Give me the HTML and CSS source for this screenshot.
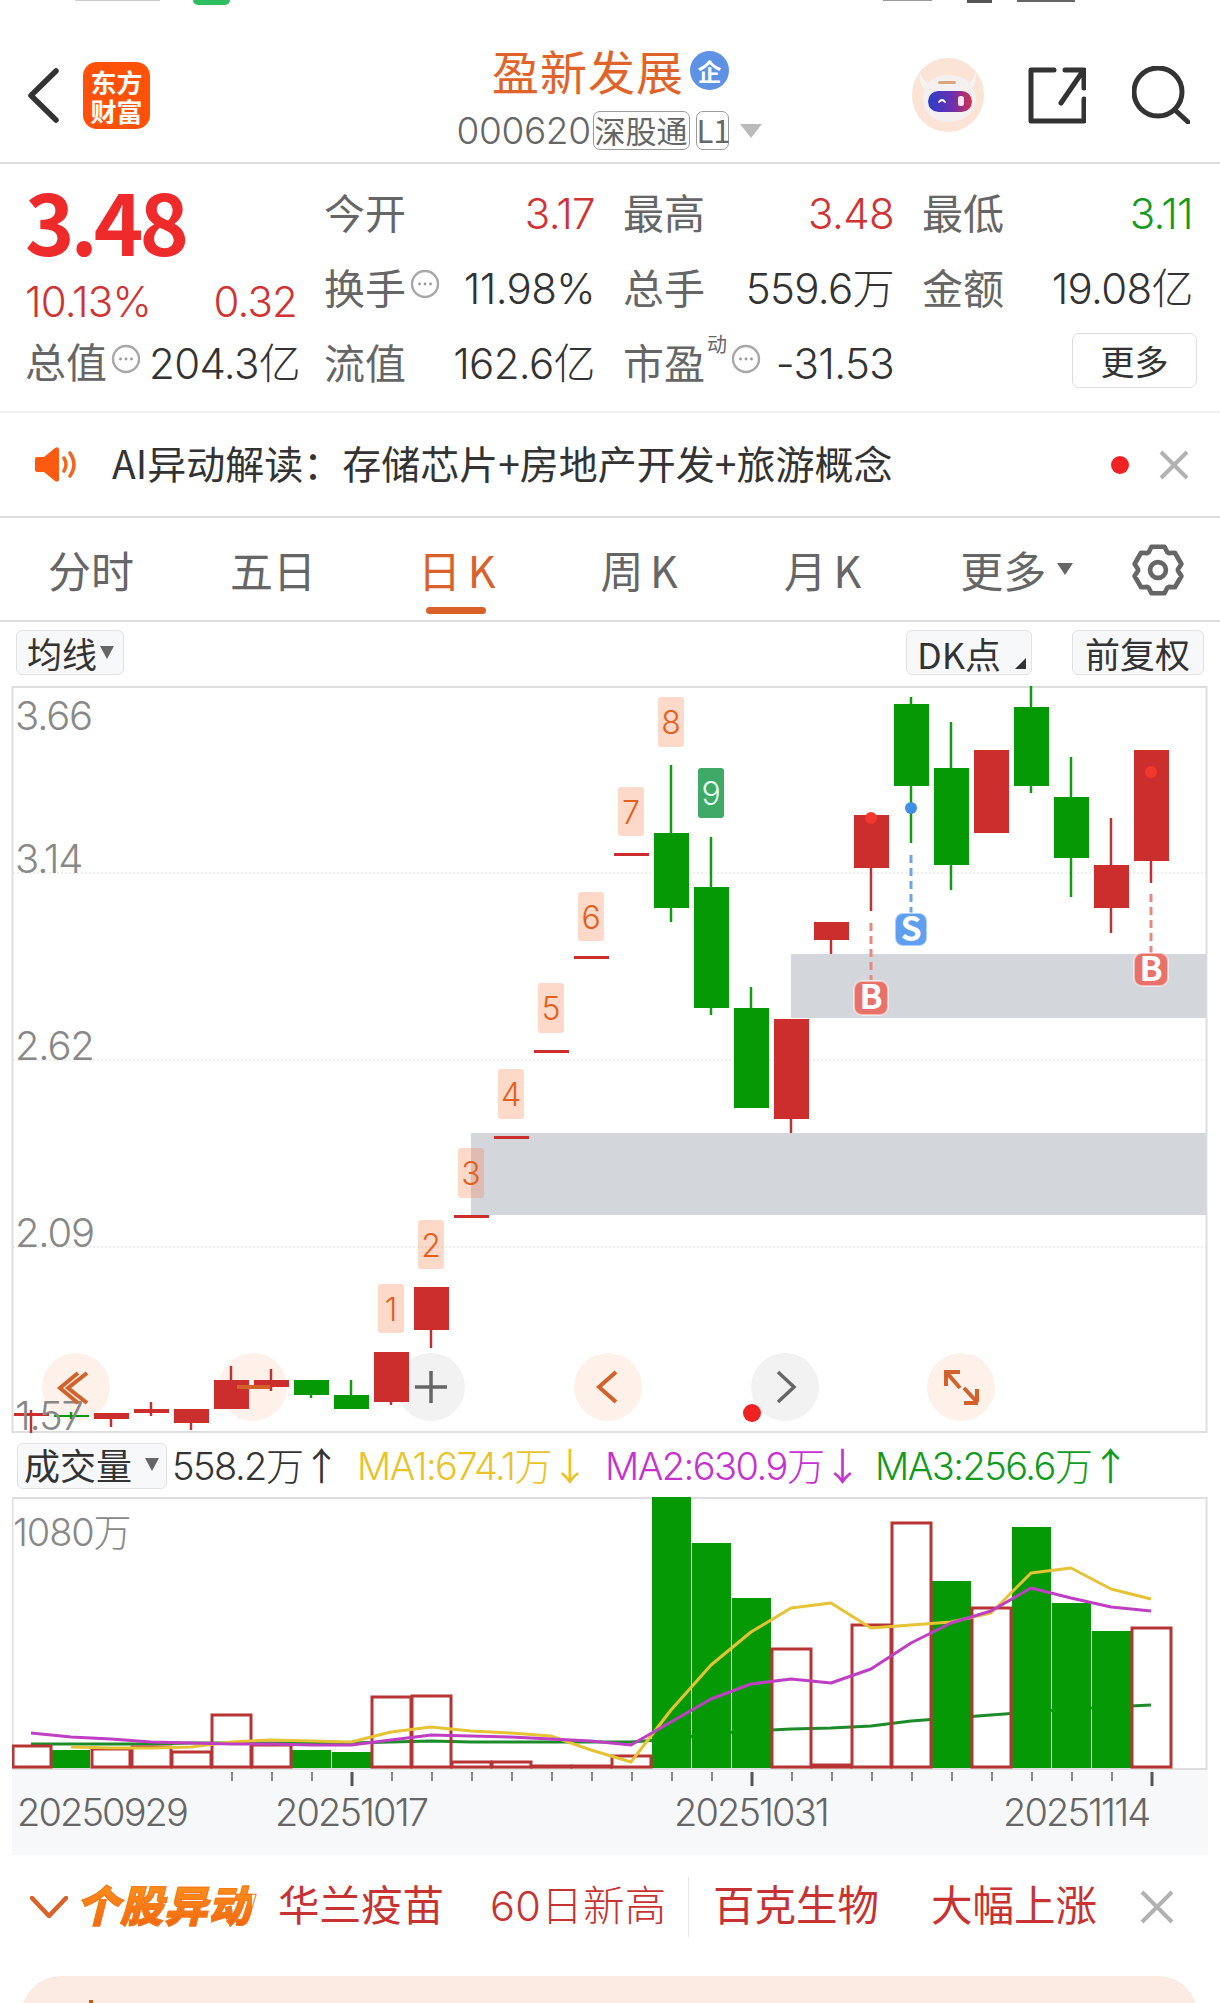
FILE: index.html
```html
<!DOCTYPE html>
<html lang="zh-CN">

<head>
	<meta charset="UTF-8">
	<meta name="viewport" content="width=device-width, initial-scale=1.0">
	<title>盈新发展 000620</title>
	<link rel="stylesheet" href="styles.css">
</head>

<body>
	<svg class="defs" width="0" height="0">
		<symbol id="icon-more" viewBox="0 0 30 30">
			<circle cx="15" cy="15" r="13" fill="none" stroke="#a8a8a8" stroke-width="2.4" />
			<circle cx="9.5" cy="15" r="1.4" fill="#999" />
			<circle cx="15" cy="15" r="1.4" fill="#999" />
			<circle cx="20.5" cy="15" r="1.4" fill="#999" />
		</symbol>
	</svg>

	<div class="status">
		<span class="status-time"></span>
		<span class="status-pill"></span>
		<span class="status-signal"></span>
		<span class="status-wifi"></span>
		<span class="status-bat"></span>
	</div>

	<header class="head">
		<div class="head-left">
			<svg class="icon-back" viewBox="0 0 33 55"><path d="M29 3 4 27.500 29 52" /></svg>
			<div class="logo">东方<br>财富</div>
		</div>
		<div class="head-mid">
			<div class="head-title">
				<span class="stock-name">盈新发展</span>
				<span class="badge-qi">企</span>
			</div>
			<div class="head-code">
				<span class="stock-code">000620</span>
				<span class="tag tag-sgt">深股通</span>
				<span class="tag tag-l1">L1</span>
				<i class="caret-code"></i>
			</div>
		</div>
		<div class="head-right">
			<svg class="robot" viewBox="0 0 74 74">
				<defs>
					<linearGradient id="visor" x1="0" x2="1" y1="0" y2="0">
						<stop offset="0" stop-color="#2b3fc8" />
						<stop offset=".55" stop-color="#6a2fb0" />
						<stop offset="1" stop-color="#d3304f" />
					</linearGradient>
				</defs>
				<ellipse cx="37" cy="37" rx="36" ry="37" fill="#fbe3d6" />
				<path d="M9 14q2 9 9 11l-4 7q-7-7-5-18ZM64 13q0 10-8 12l4 7q7-7 4-19Z" fill="#f6f3f1" />
				<path d="M12 40q0-22 25-23 26 1 28 23 0 22-28 24-25-2-25-24Z" fill="#f3f0ef" />
				<rect x="27" y="23" width="18" height="3" rx="1.500" fill="#d9a878" />
				<rect x="17" y="33" width="44" height="21" rx="10.500" fill="url(#visor)" />
				<path d="M28 44q3-4 6 0" fill="none" stroke="#fff" stroke-width="1.800" stroke-linecap="round" />
				<rect x="47" y="38" width="6" height="10" rx="2.500" fill="#fbe4ea" />
			</svg>
			<svg class="icon-share" viewBox="0 0 58 57">
				<path d="M26 3H3v51h53V32M33 36 55 4M37 3h19v18" />
			</svg>
			<svg class="icon-search" viewBox="0 0 58 58">
				<circle cx="26" cy="26" r="24" />
				<path d="M43 44 56 56" />
			</svg>
		</div>
	</header>

	<section class="quote">
		<div class="quote-main">
			<div class="price">3.48</div>
			<div class="change"><span>10.13%</span><span>0.32</span></div>
			<div class="quote-cap">
				<span class="stat-label">总值</span>
				<svg class="icon-more"><use href="#icon-more" /></svg>
				<span class="stat-val">204.3亿</span>
			</div>
		</div>
		<div class="stats">
			<div class="stat"><span class="stat-label">今开</span><span class="stat-val up">3.17</span></div>
			<div class="stat"><span class="stat-label">最高</span><span class="stat-val up">3.48</span></div>
			<div class="stat"><span class="stat-label">最低</span><span class="stat-val down">3.11</span></div>
			<div class="stat"><span class="stat-label">换手<svg class="icon-more"><use href="#icon-more" /></svg></span><span class="stat-val">11.98%</span></div>
			<div class="stat"><span class="stat-label">总手</span><span class="stat-val">559.6万</span></div>
			<div class="stat"><span class="stat-label">金额</span><span class="stat-val">19.08亿</span></div>
			<div class="stat"><span class="stat-label">流值</span><span class="stat-val">162.6亿</span></div>
			<div class="stat"><span class="stat-label">市盈<sup class="stat-sup">动</sup><svg class="icon-more"><use href="#icon-more" /></svg></span><span class="stat-val">-31.53</span></div>
			<div class="stat stat-end"><button class="btn-more">更多</button></div>
		</div>
	</section>

	<section class="notice">
		<svg class="icon-speaker" viewBox="0 0 44 35">
			<path class="speaker-body" d="M1 12q0-2 2-2h7L21 1q3-2 4 1v31q-1 3-4 1L10 25H3q-2 0-2-2Z" />
			<path class="speaker-wave" d="M30 11q4 6.500 0 13M36 6q8 11.500 0 23" />
		</svg>
		<span class="notice-text">AI异动解读：存储芯片+房地产开发+旅游概念</span>
		<i class="notice-dot"></i>
		<svg class="icon-close notice-close" viewBox="0 0 30 30"><path d="M2 2 28 28M28 2 2 28" /></svg>
	</section>

	<nav class="tabs">
		<span class="tab tab-fs">分时</span>
		<span class="tab tab-wr">五日</span>
		<span class="tab tab-rk tab-active">日 K</span>
		<span class="tab tab-zk">周 K</span>
		<span class="tab tab-yk">月 K</span>
		<span class="tab tab-more">更多<i class="caret-tab"></i></span>
		<svg class="icon-gear" viewBox="-29 -29 58 58">
			<path d="M-10-19-7-25H7L10-19 11.450-18.160 18.150-18.560 25.150-6.440 21.450-.84V.84L25.150 6.440 18.160 18.560 11.460 18.160 10 19 7 25H-7L-10 19-11.450 18.160-18.150 18.560-25.150 6.440-21.450.84V-.84L-25.150-6.440-18.160-18.560-11.460-18.160Z" />
			<circle r="8.500" />
		</svg>
	</nav>

	<div class="toolbar">
		<span class="tool-btn tool-ma">均线<i class="caret-tool"></i></span>
		<span class="tool-btn tool-dk">DK点<i class="corner-tool"></i></span>
		<span class="tool-btn tool-fq">前复权</span>
	</div>

	<svg class="kline" viewBox="12 686 1196 748">
		<rect class="frame" x="12.500" y="687" width="1194" height="745" />
		<path class="grid" d="M13 873H1206M13 1060H1206M13 1247H1206" />

		<!-- control buttons lie under the candles -->
		<circle class="ctl-warm" cx="76" cy="1387" r="34" />
		<circle class="ctl-warm" cx="253" cy="1387" r="34" />
		<circle class="ctl-gray" cx="431" cy="1387" r="34" />
		<circle class="ctl-warm" cx="608" cy="1387" r="34" />
		<circle class="ctl-gray" cx="785" cy="1387" r="34" />
		<circle class="ctl-warm" cx="961" cy="1387" r="34" />

		<rect class="zone" x="791" y="954" width="415" height="64" />
		<rect class="zone" x="471" y="1133" width="735" height="82" />

		<path class="wick-red" d="M31 1410V1433M151 1402V1416M111 1419V1427M191 1423V1430M231 1366V1380M271 1369V1391M391 1402V1405M431 1330V1348M791 1119V1133M831 940V954M871 868V911M1111 818V865M1111 908V933M1151 861V883" />
		<path class="wick-green" d="M71 1412V1419M311 1395V1398M351 1380V1395M671 765V833M671 908V922M711 837V887M711 1008V1015M751 987V1008M911 697V704M911 786V843M951 722V768M951 865V890M1031 686V707M1031 786V793M1071 757V797M1071 858V897" />

		<g class="body-red">
			<rect x="14" y="1413" width="35" height="3" />
			<rect x="94" y="1413" width="35" height="6" />
			<rect x="134" y="1409" width="35" height="4" />
			<rect x="174" y="1409" width="35" height="14" />
			<rect x="214" y="1380" width="35" height="29" />
			<rect x="254" y="1380" width="35" height="7" />
			<rect x="374" y="1352" width="35" height="50" />
			<rect x="414" y="1287" width="35" height="43" />
			<rect x="454" y="1215" width="35" height="3" />
			<rect x="494" y="1136" width="35" height="3" />
			<rect x="534" y="1050" width="35" height="3" />
			<rect x="574" y="956" width="35" height="3" />
			<rect x="614" y="853" width="35" height="3" />
			<rect x="774" y="1019" width="35" height="100" />
			<rect x="814" y="922" width="35" height="18" />
			<rect x="854" y="815" width="35" height="53" />
			<rect x="974" y="750" width="35" height="83" />
			<rect x="1094" y="865" width="35" height="43" />
			<rect x="1134" y="750" width="35" height="111" />
		</g>
		<g class="body-green">
			<rect x="54" y="1415" width="35" height="2" />
			<rect x="294" y="1380" width="35" height="15" />
			<rect x="334" y="1395" width="35" height="14" />
			<rect x="654" y="833" width="35" height="75" />
			<rect x="694" y="887" width="35" height="121" />
			<rect x="734" y="1008" width="35" height="100" />
			<rect x="894" y="704" width="35" height="82" />
			<rect x="934" y="768" width="35" height="97" />
			<rect x="1014" y="707" width="35" height="79" />
			<rect x="1054" y="797" width="35" height="61" />
		</g>

		<g class="nine">
			<rect x="378" y="1284" width="26" height="49" rx="3" /><text x="391" y="1321">1</text>
			<rect x="418" y="1220" width="26" height="49" rx="3" /><text x="431" y="1257">2</text>
			<rect x="458" y="1148" width="26" height="50" rx="3" /><text x="471" y="1185">3</text>
			<rect x="498" y="1069" width="26" height="50" rx="3" /><text x="511" y="1106">4</text>
			<rect x="538" y="983" width="26" height="50" rx="3" /><text x="551" y="1020">5</text>
			<rect x="578" y="892" width="26" height="49" rx="3" /><text x="591" y="929">6</text>
			<rect x="618" y="787" width="26" height="49" rx="3" /><text x="631" y="824">7</text>
			<rect x="658" y="697" width="26" height="50" rx="3" /><text x="671" y="734">8</text>
		</g>
		<g class="nine nine-end">
			<rect x="698" y="768" width="26" height="50" rx="3" /><text x="711" y="805">9</text>
		</g>

		<path class="dash-red" d="M871 923V980M1151 894V953" />
		<path class="dash-blue" d="M911 855V913" />
		<circle class="dot-red" cx="871" cy="818" r="6" />
		<circle class="dot-red" cx="1151" cy="772" r="6" />
		<circle class="dot-blue" cx="911" cy="808" r="6" />

		<g class="mark mark-b">
			<rect x="854" y="981" width="34" height="34" rx="8" /><text x="871" y="1009">B</text>
			<rect x="1134" y="953" width="34" height="33" rx="8" /><text x="1151" y="981">B</text>
		</g>
		<g class="mark mark-s">
			<rect x="895" y="913" width="32" height="33" rx="8" /><text x="911" y="941">S</text>
		</g>

		<g class="axis-y">
			<text x="15" y="730">3.66</text>
			<text x="15" y="873">3.14</text>
			<text x="15" y="1060">2.62</text>
			<text x="15" y="1247">2.09</text>
			<text x="15" y="1430">1.57</text>
		</g>

		<path class="ctl-icon-warm" d="M87 1373 68 1388 87 1403M78 1373 60 1388 78 1403" />
		<path class="ctl-icon-warm" d="M237 1387H270" />
		<path class="ctl-icon-gray" d="M415 1387H447M431 1371V1403" />
		<path class="ctl-icon-warm" d="M616 1372 599 1387 616 1402" />
		<path class="ctl-icon-gray" d="M778 1372 794 1387 778 1402" />
		<path class="ctl-icon-warm" d="M946 1386V1372H960M947 1373 960 1388M978 1403H964M977 1402V1389M977 1402 964 1388" />
		<circle class="dot-live" cx="752" cy="1413" r="9" />
	</svg>

	<div class="vol-legend">
		<span class="tool-btn tool-vol">成交量<i class="caret-tool"></i></span>
		<span class="vol-now">558.2万<b class="arrow">↑</b></span>
		<span class="vol-ma1">MA1:674.1万<b class="arrow">↓</b></span>
		<span class="vol-ma2">MA2:630.9万<b class="arrow">↓</b></span>
		<span class="vol-ma3">MA3:256.6万<b class="arrow">↑</b></span>
	</div>

	<svg class="volume" viewBox="12 1497 1196 273">
		<rect class="frame" x="12.500" y="1498" width="1194" height="271" />
		<polyline class="ma3" points="31,1744 71,1744 111,1744 151,1744 191,1743 231,1743 271,1743 311,1743 351,1743 391,1742 431,1741 471,1742 511,1742 551,1742 591,1742 631,1742 671,1739 711,1734 751,1731 791,1729 831,1728 871,1726 911,1721 951,1718 991,1715 1031,1712 1071,1709 1111,1707 1151,1705" />

		<g class="vol-down">
			<rect x="52" y="1750" width="38" height="18" />
			<rect x="292" y="1750" width="39" height="18" />
			<rect x="332" y="1752" width="39" height="16" />
			<rect x="652" y="1497" width="39" height="271" />
			<rect x="692" y="1543" width="39" height="225" />
			<rect x="732" y="1598" width="39" height="170" />
			<rect x="932" y="1581" width="39" height="187" />
			<rect x="1012" y="1527" width="39" height="241" />
			<rect x="1052" y="1603" width="39" height="165" />
			<rect x="1092" y="1631" width="39" height="137" />
		</g>
		<g class="vol-up">
			<rect x="13" y="1746" width="38" height="21" />
			<rect x="92" y="1749" width="38" height="18" />
			<rect x="132" y="1747" width="39" height="20" />
			<rect x="172" y="1752" width="39" height="15" />
			<rect x="212" y="1715" width="39" height="52" />
			<rect x="252" y="1745" width="39" height="22" />
			<rect x="372" y="1697" width="39" height="70" />
			<rect x="412" y="1696" width="39" height="71" />
			<rect x="452" y="1762" width="39" height="5" />
			<rect x="492" y="1762" width="39" height="5" />
			<rect x="532" y="1766" width="39" height="1" />
			<rect x="572" y="1766" width="39" height="1" />
			<rect x="612" y="1756" width="39" height="11" />
			<rect x="772" y="1649" width="39" height="118" />
			<rect x="812" y="1765" width="39" height="2" />
			<rect x="852" y="1625" width="39" height="142" />
			<rect x="892" y="1523" width="39" height="244" />
			<rect x="972" y="1608" width="39" height="159" />
			<rect x="1132" y="1628" width="39" height="139" />
		</g>

		<polyline class="ma1" points="71,1747 111,1748 151,1748 191,1747 231,1742 271,1740 311,1741 351,1742 391,1732 431,1727 471,1731 511,1733 551,1736 591,1750 631,1762 671,1710 711,1665 751,1632 791,1608 831,1603 871,1628 911,1625 951,1622 991,1613 1031,1573 1071,1568 1111,1589 1151,1599" />
		<polyline class="ma2" points="31,1733 71,1737 111,1739 151,1742 191,1743 231,1744 271,1744 311,1745 351,1745 391,1740 431,1735 471,1736 511,1737 551,1739 591,1741 631,1745 671,1722 711,1699 751,1684 791,1679 831,1683 871,1669 911,1643 951,1623 991,1611 1031,1588 1071,1598 1111,1607 1151,1611" />
		<text class="vol-top" x="13" y="1546">1080万</text>
	</svg>

	<svg class="axis-x" viewBox="12 1770 1196 85">
		<path class="tick" d="M232 1772V1781M272 1772V1781M312 1772V1781M392 1772V1781M432 1772V1781M472 1772V1781M512 1772V1781M552 1772V1781M592 1772V1781M632 1772V1781M672 1772V1781M712 1772V1781M792 1772V1781M832 1772V1781M872 1772V1781M912 1772V1781M952 1772V1781M992 1772V1781M1032 1772V1781M1072 1772V1781M1112 1772V1781" />
		<path class="tick tick-main" d="M352 1772V1786M752 1772V1786M1152 1772V1786" />
		<text x="17" y="1826">20250929</text>
		<text x="275" y="1826">20251017</text>
		<text x="674" y="1826">20251031</text>
		<text x="1003" y="1826">20251114</text>
	</svg>

	<section class="alert">
		<svg class="icon-fold" viewBox="0 0 38 22"><path d="M2 2 19 20 36 2" /></svg>
		<span class="alert-title">个股异动</span>
		<span class="alert-item alert-a">华兰疫苗</span>
		<span class="alert-item alert-b">60日新高</span>
		<i class="alert-line"></i>
		<span class="alert-item alert-c">百克生物</span>
		<span class="alert-item alert-d">大幅上涨</span>
		<svg class="icon-close alert-close" viewBox="0 0 34 34"><path d="M2 2 32 32M32 2 2 32" /></svg>
	</section>

	<section class="card"><i class="card-mark"></i></section>
</body>

</html>
```

FILE: styles.css
```css
* {
	margin: 0;
	padding: 0;
	box-sizing: border-box;
}

html,
body {
	height: 2003px;
	overflow: hidden;
}

body {
	width: 1220px;
	background: #fff;
	font-family: 'Noto Sans CJK SC', 'Noto Sans', sans-serif;
	color: #333;
}

i {
	display: block;
	font-style: normal;
}

svg {
	display: block;
}

.defs {
	position: absolute;
}

/* numbers: this face has the narrow 1 of the reference */
.stat-val,
.change,
.stock-code,
.axis-y text,
.axis-x text,
.vol-top,
.vol-legend span:not(.tool-btn),
.nine text,
.alert-b {
	font-family: 'Inter', 'Noto Sans CJK SC', sans-serif;
	font-weight: 300;
	letter-spacing: -.04em;
}

.arrow {
	font-family: 'Noto Sans CJK SC', sans-serif;
	font-weight: 400;
	letter-spacing: 0;
}

/* status bar, only its lower edge is on screen */
.status {
	display: flex;
	height: 6px;
	overflow: hidden;
}

.status-time {
	width: 85px;
	height: 1px;
	margin-left: 75px;
	background: #ccc;
}

.status-pill {
	width: 37px;
	height: 5px;
	margin-left: 33px;
	background: #2fbd62;
	border-radius: 0 0 8px 8px;
}

.status-signal {
	width: 49px;
	height: 1px;
	margin-left: 653px;
	background: #999;
}

.status-wifi {
	width: 25px;
	height: 3px;
	margin-left: 35px;
	background: #555;
}

.status-bat {
	width: 58px;
	height: 2px;
	margin-left: 25px;
	background: #666;
}

/* header */
.head {
	display: grid;
	grid-template-columns: 1fr auto 1fr;
	height: 158px;
	border-bottom: 2px solid #dcdcdc;
}

.head-left {
	display: flex;
	align-items: center;
	padding: 22px 0 0 27px;
}

.icon-back {
	width: 33px;
	height: 55px;
	fill: none;
	stroke: #333;
	stroke-width: 5.500;
	stroke-linecap: round;
	stroke-linejoin: round;
}

.logo {
	width: 67px;
	height: 67px;
	margin-left: 23px;
	padding-top: 5px;
	background: #ff5208;
	border-radius: 14px;
	color: #fff;
	font-size: 26px;
	font-weight: 700;
	line-height: 29px;
	text-align: center;
}

.head-mid {
	padding-top: 44px;
}

.head-title {
	display: flex;
	align-items: center;
	justify-content: center;
	height: 40px;
	padding-left: 1px;
}

.stock-name {
	color: #e0642a;
	font-size: 47px;
	line-height: 40px;
	letter-spacing: 1px;
}

.badge-qi {
	width: 39px;
	height: 39px;
	margin-left: 6px;
	background: #5f92e4;
	border-radius: 50%;
	color: #fff;
	font-size: 24px;
	font-weight: 700;
	line-height: 39px;
	text-align: center;
}

.head-code {
	display: flex;
	align-items: center;
	height: 39px;
	margin-top: 21px;
}

.stock-code {
	width: 130px;
	margin-left: -2px;
	color: #666;
	font-size: 37px;
	line-height: 39px;
	letter-spacing: -.01em;
}

.tag {
	height: 39px;
	border: 1.500px solid #999;
	border-radius: 7px;
	color: #666;
	font-size: 31px;
	line-height: 35px;
	text-align: center;
}

.tag-sgt {
	width: 97px;
	margin-left: 6px;
}

.tag-l1 {
	width: 33px;
	margin-left: 6px;
}

.caret-code {
	width: 0;
	height: 0;
	margin-left: 11px;
	border-top: 14px solid #bbb;
	border-left: 11px solid transparent;
	border-right: 11px solid transparent;
}

.head-right {
	display: flex;
	align-items: center;
	justify-content: flex-end;
	padding: 22px 30px 0 0;
}

.robot {
	width: 74px;
	height: 74px;
	filter: blur(.5px);
}

.icon-share {
	width: 58px;
	height: 57px;
	margin-left: 43px;
	fill: none;
	stroke: #333;
	stroke-width: 5;
	stroke-linecap: round;
	stroke-linejoin: round;
}

.icon-search {
	width: 58px;
	height: 58px;
	margin-left: 46px;
	fill: none;
	stroke: #333;
	stroke-width: 5;
	stroke-linecap: round;
}

/* quote block */
.quote {
	display: flex;
	height: 249px;
	padding: 0 27px 0 25px;
	border-bottom: 2px solid #efefef;
}

.quote-main {
	width: 272px;
}

.price {
	height: 100px;
	padding-top: 6px;
	color: #ee2a2a;
	font-size: 84px;
	font-weight: 700;
	line-height: 100px;
	letter-spacing: -4px;
}

.change {
	display: flex;
	justify-content: space-between;
	height: 67px;
	margin-top: 15px;
	color: #cf3333;
	font-size: 42px;
	line-height: 46px;
	letter-spacing: -.02em;
}

.quote-cap {
	display: flex;
	align-items: center;
	height: 46px;
	margin-top: -9px;
}

.stat-label {
	display: flex;
	align-items: center;
	color: #666;
	font-size: 41px;
	line-height: 46px;
	white-space: nowrap;
}

.stat-val {
	margin: 7px -1px 0 0;
	color: #333;
	font-size: 42px;
	line-height: 46px;
	letter-spacing: -.015em;
	white-space: nowrap;
}

.stat-val.up {
	color: #cf3333;
}

.stat-val.down {
	color: #139b1e;
}

.icon-more {
	flex: none;
	width: 30px;
	height: 30px;
	margin: -3px 0 0 4px;
}

.quote-cap .icon-more {
	margin-right: 8px;
}

.stats {
	display: grid;
	grid-template-columns: repeat(3, 270px);
	grid-auto-rows: 75px;
	column-gap: 29px;
	margin-left: 27px;
	padding-top: 9px;
}

.stat {
	display: flex;
	align-items: center;
	justify-content: space-between;
}

.stat-end {
	justify-content: flex-end;
}

.stat-sup {
	align-self: flex-start;
	margin: -6px 0 0 2px;
	font-size: 20px;
	line-height: 24px;
}

.btn-more {
	width: 125px;
	height: 55px;
	margin-right: -5px;
	background: #fff;
	border: 1.500px solid #ddd;
	border-radius: 7px;
	color: #333;
	font-family: inherit;
	font-size: 34px;
}

/* notice */
.notice {
	display: flex;
	align-items: center;
	height: 105px;
	padding: 0 31px 0 34px;
	border-bottom: 2px solid #dcdcdc;
}

.icon-speaker {
	width: 44px;
	height: 35px;
}

.speaker-body {
	fill: #fb5a10;
}

.speaker-wave {
	fill: none;
	stroke: #f2651f;
	stroke-width: 3.500;
	stroke-linecap: round;
}

.notice-text {
	margin: -6px 0 0 34px;
	color: #333;
	font-size: 39px;
	white-space: nowrap;
}

.notice-dot {
	width: 18px;
	height: 18px;
	margin-left: auto;
	background: #ee2222;
	border-radius: 50%;
}

.icon-close {
	fill: none;
	stroke: #b2b2b2;
	stroke-width: 4;
}

.notice-close {
	width: 30px;
	height: 30px;
	margin-left: 30px;
}

/* tabs */
.tabs {
	display: flex;
	align-items: center;
	height: 104px;
	border-bottom: 2px solid #dcdcdc;
}

.tab {
	color: #666;
	font-size: 43px;
	line-height: 50px;
	white-space: nowrap;
	word-spacing: -3px;
}

.tab-fs {
	margin-left: 48px;
}

.tab-wr {
	margin-left: 96px;
}

.tab-rk {
	margin-left: 102px;
}

.tab-zk {
	margin-left: 105px;
}

.tab-yk {
	margin-left: 106px;
}

.tab-more {
	display: flex;
	align-items: center;
	margin-left: 99px;
}

.tab-active {
	position: relative;
	color: #d9622b;
}

.tab-active::after {
	content: '';
	position: absolute;
	left: 8px;
	bottom: -20px;
	width: 60px;
	height: 7px;
	background: #d9622b;
	border-radius: 4px;
}

.caret-tab {
	width: 0;
	height: 0;
	margin-left: 11px;
	border-top: 12px solid #666;
	border-left: 8px solid transparent;
	border-right: 8px solid transparent;
}

.icon-gear {
	width: 54px;
	height: 54px;
	margin: 2px 0 0 58px;
	fill: none;
	stroke: #666;
	stroke-width: 5;
	stroke-linejoin: round;
}

/* chart toolbar */
.toolbar {
	display: flex;
	align-items: flex-start;
	height: 64px;
	padding: 8px 0 0 16px;
}

.tool-btn {
	display: flex;
	align-items: center;
	position: relative;
	height: 45px;
	padding-left: 10px;
	background: #f7f8fa;
	border: 1.500px solid #e0e2e6;
	border-radius: 6px;
	color: #333;
	font-size: 35px;
	white-space: nowrap;
}

.tool-ma {
	width: 108px;
}

.tool-dk {
	width: 126px;
	margin-left: 782px;
	font-size: 36px;
}

.tool-fq {
	width: 132px;
	margin-left: 40px;
	padding-left: 12px;
}

.caret-tool {
	width: 0;
	height: 0;
	margin-left: 3px;
	border-top: 13px solid #666;
	border-left: 7px solid transparent;
	border-right: 7px solid transparent;
}

.corner-tool {
	position: absolute;
	right: 5px;
	bottom: 5px;
	width: 0;
	height: 0;
	border-bottom: 11px solid #333;
	border-left: 11px solid transparent;
}

/* k line */
.kline {
	width: 1196px;
	height: 748px;
	margin-left: 12px;
	overflow: visible;
	font-family: 'Noto Sans CJK SC', 'Noto Sans', sans-serif;
}

.frame {
	fill: #fff;
	stroke: #dedede;
	stroke-width: 2;
}

.grid {
	fill: none;
	stroke: #ddd;
	stroke-width: 1;
	stroke-dasharray: 2 2;
}

.ctl-warm {
	fill: #fdf1ea;
}

.ctl-gray {
	fill: #f2f2f2;
}

.zone {
	fill: #d3d6db;
}

.wick-red {
	fill: none;
	stroke: #bb3434;
	stroke-width: 2.500;
}

.wick-green {
	fill: none;
	stroke: #129a12;
	stroke-width: 2.500;
}

.body-red rect {
	fill: #cc2e2e;
}

.body-green rect {
	fill: #069906;
}

.nine rect {
	fill: rgba(249, 130, 80, .3);
}

.nine text {
	fill: #e2601c;
	font-size: 32px;
	letter-spacing: 0;
	text-anchor: middle;
}

.nine-end rect {
	fill: #3fa968;
}

.nine-end text {
	fill: #eafff2;
}

.dash-red {
	fill: none;
	stroke: #e58a80;
	stroke-width: 3;
	stroke-dasharray: 8 5;
}

.dash-blue {
	fill: none;
	stroke: #6ea4e2;
	stroke-width: 3;
	stroke-dasharray: 8 5;
}

.dot-red {
	fill: #f2372c;
}

.dot-blue {
	fill: #3f8fe2;
}

.dot-live {
	fill: #ee2222;
}

.mark rect {
	stroke: rgba(255, 255, 255, .5);
	stroke-width: 2;
}

.mark text {
	fill: #fff;
	font-size: 34px;
	font-weight: 700;
	text-anchor: middle;
}

.mark-b rect {
	fill: #e8726a;
}

.mark-s rect {
	fill: #5f9ff0;
}

.axis-y text {
	fill: #888;
	font-size: 40px;
	letter-spacing: -.03em;
}

.ctl-icon-warm {
	fill: none;
	stroke: #d2622a;
	stroke-width: 4;
}

.ctl-icon-gray {
	fill: none;
	stroke: #666;
	stroke-width: 3.500;
}

/* volume */
.vol-legend {
	display: flex;
	align-items: flex-start;
	height: 63px;
	padding: 9px 0 0 17px;
	font-size: 38px;
	white-space: nowrap;
}

.tool-vol {
	flex: none;
	width: 150px;
	height: 46px;
	padding: 0 0 4px 6px;
	font-size: 36px;
}

.tool-vol .caret-tool {
	margin-left: 13px;
}

.vol-legend span:not(.tool-btn) {
	flex: none;
	margin-top: -2px;
	line-height: 46px;
}

.vol-now {
	width: 185px;
	margin-left: 5px;
	color: #333;
}

.vol-ma1 {
	width: 248px;
	color: #e8c32a;
}

.vol-ma2 {
	width: 270px;
	color: #c532cf;
}

.vol-ma3 {
	color: #129a1c;
}

.volume {
	width: 1196px;
	height: 273px;
	margin-left: 12px;
	font-family: 'Noto Sans CJK SC', 'Noto Sans', sans-serif;
}

.vol-down rect {
	fill: #069906;
}

.vol-up rect {
	fill: none;
	stroke: #b73434;
	stroke-width: 3;
}

.ma1,
.ma2,
.ma3 {
	fill: none;
	stroke-width: 3;
	stroke-linejoin: round;
}

.ma1 {
	stroke: #e6c334;
}

.ma2 {
	stroke: #bf3fc4;
}

.ma3 {
	stroke: #1c8c2a;
}

.vol-top {
	fill: #888;
	font-size: 38px;
	letter-spacing: -.03em;
}

.axis-x {
	width: 1196px;
	height: 85px;
	margin-left: 12px;
	background: #f7f8fa;
	font-family: 'Noto Sans CJK SC', 'Noto Sans', sans-serif;
}

.axis-x text {
	fill: #666;
	font-size: 38px;
	letter-spacing: -.05em;
}

.tick {
	fill: none;
	stroke: #888;
	stroke-width: 2;
}

.tick-main {
	stroke: #555;
	stroke-width: 3;
}

/* alert strip */
.alert {
	display: flex;
	align-items: center;
	height: 121px;
	padding: 0 0 18px 30px;
	white-space: nowrap;
}

.icon-fold {
	width: 38px;
	height: 22px;
	fill: none;
	stroke: #d9622b;
	stroke-width: 4.500;
	stroke-linecap: round;
	stroke-linejoin: round;
}

.alert-title {
	margin: -8px 0 0 8px;
	background: linear-gradient(#ff9d1e, #f0600f);
	-webkit-background-clip: text;
	background-clip: text;
	color: transparent;
	-webkit-text-stroke: 1px #f4761a;
	font-size: 43px;
	font-style: italic;
	font-weight: 900;
	letter-spacing: 1px;
}

.alert-item {
	margin-top: -8px;
	color: #c83232;
	font-size: 41.500px;
}

.alert-a {
	margin-left: 26px;
}

.alert-b {
	width: 176px;
	margin-left: 46px;
	letter-spacing: .3px;
}

.alert-line {
	width: 1px;
	height: 60px;
	margin-left: 22px;
	background: #e8e8e8;
}

.alert-c {
	margin-left: 24px;
}

.alert-d {
	margin-left: 52px;
}

.alert-close {
	width: 34px;
	height: 34px;
	margin-left: 43px;
}

/* next card, cut by the bottom edge */
.card {
	width: 1177px;
	height: 60px;
	margin-left: 21px;
	background: #fcebe2;
	border-radius: 40px 40px 0 0;
}

.card-mark {
	width: 4px;
	height: 3px;
	margin-left: 68px;
	transform: translateY(24px);
	background: #c05a24;
}
```
